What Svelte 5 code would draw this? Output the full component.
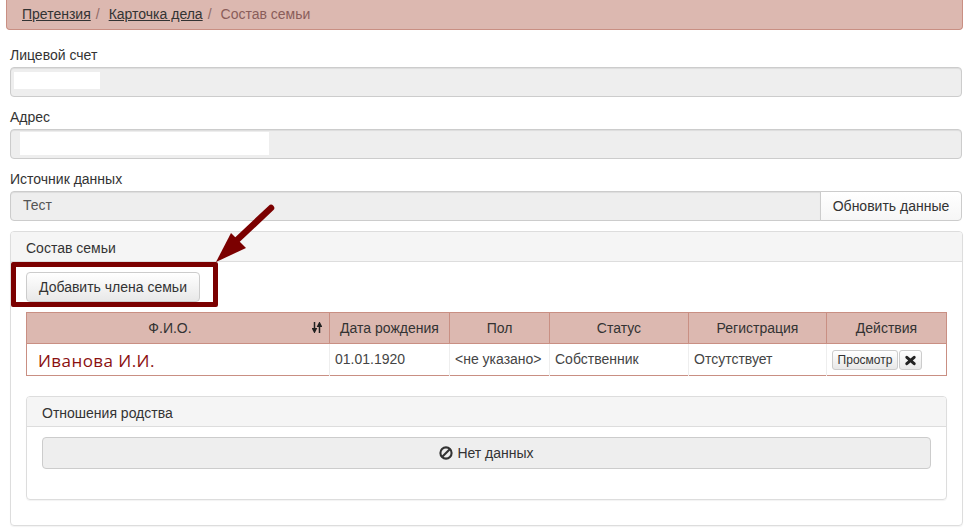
<script>
	let members = [
		{ name: 'Иванова И.И.', birth: '01.01.1920', sex: '<не указано>', status: 'Собственник', reg: 'Отсутствует' }
	];
</script>

<div class="page">
	<ol class="crumbs">
		<li><a href="#top">Претензия</a><span class="sep">/</span></li>
		<li><a href="#top">Карточка дела</a><span class="sep">/</span></li>
		<li class="current">Состав семьи</li>
	</ol>

	<div class="field">
		<label for="acc">Лицевой счет</label>
		<div class="control" id="acc"><span class="mask mask-acc"></span></div>
	</div>
	<div class="field">
		<label for="addr">Адрес</label>
		<div class="control" id="addr"><span class="mask mask-addr"></span></div>
	</div>
	<div class="field">
		<label for="src">Источник данных</label>
		<div class="group">
			<div class="control joined" id="src">Тест</div>
			<button class="btn addon">Обновить данные</button>
		</div>
	</div>

	<section class="panel outer">
		<header>Состав семьи</header>
		<div class="body">
			<button class="btn add">Добавить члена семьи</button>
			<table>
				<thead>
					<tr>
						<th class="sortable">Ф.И.О.
							<svg class="sort" viewBox="0 0 10 11" width="10" height="11">
								<path d="M2.5 0v7.5M0.9 6.8 2.5 10l1.6-3.2z" fill="#222" stroke="#222" stroke-width="1.5"/>
								<path d="M7.5 11V3.5M5.9 4.2 7.5 1l1.6 3.2z" fill="#222" stroke="#222" stroke-width="1.5"/>
							</svg>
						</th>
						<th>Дата рождения</th>
						<th>Пол</th>
						<th>Статус</th>
						<th>Регистрация</th>
						<th>Действия</th>
					</tr>
				</thead>
				<tbody>
					{#each members as m}
						<tr>
							<td class="name">{m.name}</td>
							<td>{m.birth}</td>
							<td>{m.sex}</td>
							<td>{m.status}</td>
							<td>{m.reg}</td>
							<td class="actions">
								<button class="btn mini">Просмотр</button><button class="btn mini del" aria-label="Удалить">
									<svg viewBox="0 0 12 12" width="11" height="11"><path d="M2 2.5l8 7M10 2.5l-8 7" stroke="#222" stroke-width="3.2" stroke-linecap="round"/></svg>
								</button>
							</td>
						</tr>
					{/each}
				</tbody>
			</table>

			<section class="panel inner">
				<header>Отношения родства</header>
				<div class="body">
					<div class="empty">
						<svg viewBox="0 0 14 14" width="14" height="14"><circle cx="7" cy="7" r="5.6" fill="none" stroke="#333" stroke-width="2.1"/><path d="M3 11 11 3" stroke="#333" stroke-width="2.1"/></svg>
						Нет данных
					</div>
				</div>
			</section>
		</div>
	</section>

	<div class="callout"></div>
	<svg class="arrow" viewBox="0 0 100 80" width="100" height="80">
		<path d="M271 208 237 240" transform="translate(-190 -200)" stroke="#7b0000" stroke-width="6.5" stroke-linecap="round" fill="none"/>
		<path d="M216 262 231 233 246 248z" transform="translate(-190 -200)" fill="#7b0000"/>
	</svg>
</div>

<style>
	:global(body) {
		font-family: "Liberation Sans", Arial, sans-serif;
		font-size: 14px;
		line-height: 20px;
		color: #333;
		background: #fff;
	}

	.page {
		position: relative;
		box-sizing: border-box;
		width: 969px;
		height: 531px;
		padding: 0 7px 0 10px;
		overflow: hidden;
	}

	.crumbs {
		display: flex;
		list-style: none;
		box-sizing: border-box;
		height: 30px;
		margin: 0 -1px 15px -4px;
		padding: 4px 15px 0;
		background: #dcb8b0;
		border: 1px solid #c98f83;
		border-top: 0;
		border-radius: 0 0 4px 4px;
	}

	.crumbs a {
		color: #333;
	}

	.sep {
		padding: 0 9px 0 5px;
		color: #8f6a66;
	}

	.current {
		color: #8a5d5a;
	}

	.field {
		margin-bottom: 10px;
	}

	label {
		display: block;
		height: 22px;
	}

	.control {
		box-sizing: border-box;
		height: 30px;
		padding: 3px 12px;
		background: #eee;
		border: 1px solid #ccc;
		border-radius: 4px;
		box-shadow: inset 0 1px 1px rgba(0, 0, 0, 0.075);
		color: #555;
	}

	.mask {
		display: block;
		background: #fff;
	}

	.mask-acc {
		width: 86px;
		height: 17px;
		margin: 1px 0 0 -9px;
	}

	.mask-addr {
		width: 249px;
		height: 23px;
		margin: -1px 0 0 -3px;
	}

	.group {
		display: flex;
	}

	.joined {
		flex: 1;
		border-radius: 4px 0 0 4px;
	}

	.btn {
		box-sizing: border-box;
		font: inherit;
		color: #333;
		border: 1px solid #ccc;
		border-radius: 4px;
		background: linear-gradient(#fff, #e8e8e8);
		padding: 0;
	}

	.addon {
		width: 142px;
		height: 30px;
		margin-left: -1px;
		background: linear-gradient(#fff, #f6f6f6);
		border-radius: 0 4px 4px 0;
	}

	.panel {
		border: 1px solid #ddd;
		border-radius: 4px;
		box-shadow: 0 1px 1px rgba(0, 0, 0, 0.05);
	}

	.panel header {
		box-sizing: border-box;
		height: 30px;
		padding: 6px 15px;
		background: #f5f5f5;
		border-bottom: 1px solid #ddd;
		border-radius: 3px 3px 0 0;
	}

	.outer {
		height: 295px;
		box-sizing: border-box;
		margin-right: -1px;
	}

	.outer > .body {
		padding: 10px 15px 0;
	}

	.add {
		display: block;
		width: 174px;
		height: 30px;
		margin-bottom: 10px;
	}

	table {
		width: 921px;
		border-collapse: collapse;
		table-layout: fixed;
		border: 1px solid #c98f83;
	}

	th {
		box-sizing: border-box;
		height: 31px;
		padding: 0;
		font-weight: normal;
		background: #dcb8b0;
		border: 1px solid #c98f83;
		text-align: center;
		color: #333;
	}

	th:nth-child(1) { width: 303px; }
	th:nth-child(2) { width: 120px; }
	th:nth-child(3) { width: 100px; }
	th:nth-child(4) { width: 139px; }
	th:nth-child(5) { width: 138px; }

	.sortable {
		position: relative;
		padding-right: 16px;
	}

	.sort {
		position: absolute;
		right: 7px;
		top: 9px;
	}

	td {
		box-sizing: border-box;
		height: 32px;
		padding: 0 5px 1px;
		border-left: 1px solid #eee;
		white-space: nowrap;
		overflow: hidden;
		color: #444;
	}

	td.name {
		padding: 3px 0 0 11px;
		font-family: "Open Sans", sans-serif;
		font-size: 17px;
		letter-spacing: 0.45px;
		color: #8b1010;
		border-left: 0;
	}

	.actions {
		padding: 0 0 0 5px;
	}

	.mini {
		height: 20px;
		font-size: 12px;
		line-height: 18px;
		border-radius: 3px;
		vertical-align: middle;
	}

	.actions .mini:first-child {
		width: 66px;
		margin-right: 1px;
	}

	.del {
		width: 23px;
	}

	.del svg {
		display: block;
		margin: auto;
	}

	.inner {
		height: 104px;
		box-sizing: border-box;
		margin-top: 20px;
	}

	.inner > .body {
		padding: 10px 15px;
	}

	.empty {
		display: flex;
		justify-content: center;
		align-items: center;
		gap: 4px;
		box-sizing: border-box;
		height: 32px;
		background: #eee;
		border: 1px solid #ccc;
		border-radius: 4px;
	}

	.callout {
		position: absolute;
		left: 11px;
		top: 262px;
		width: 207px;
		height: 45px;
		box-sizing: border-box;
		border: 5px solid #7b0000;
		border-radius: 2px;
	}

	.arrow {
		position: absolute;
		left: 190px;
		top: 200px;
	}
</style>
